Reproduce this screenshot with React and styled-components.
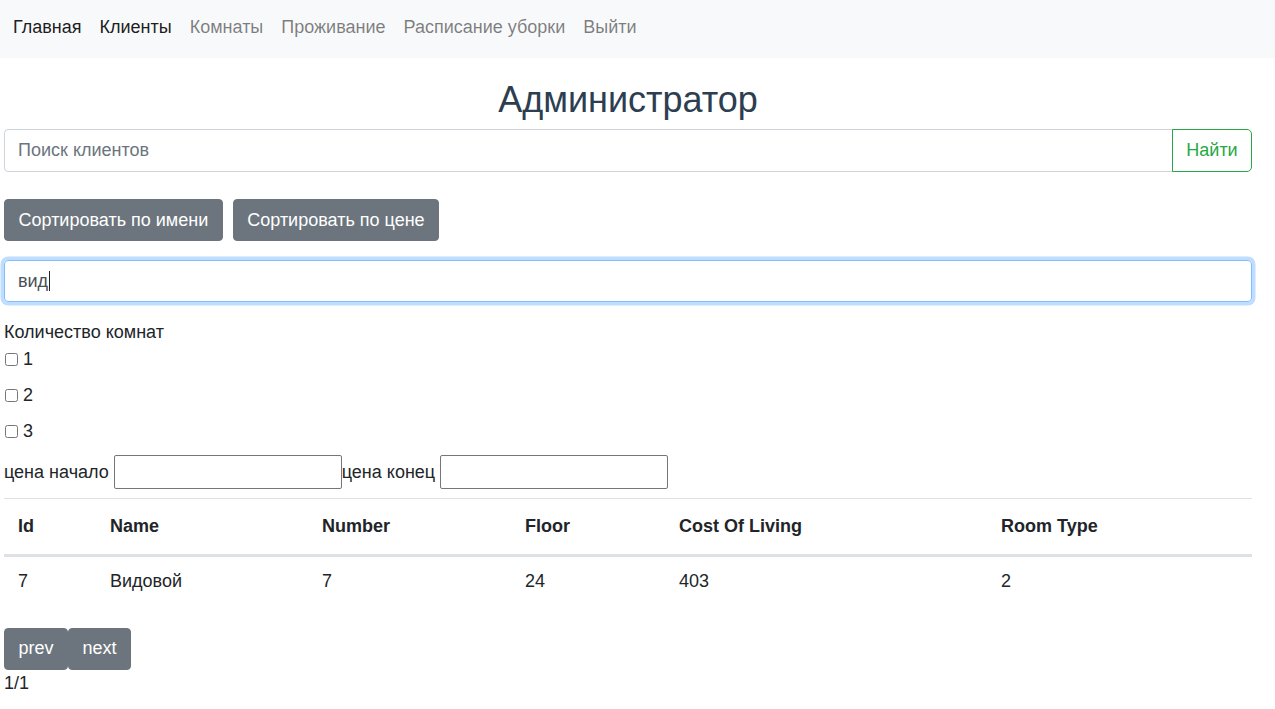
import React from "react";
import styled, { createGlobalStyle } from "styled-components";

const GlobalStyle = createGlobalStyle`
  * {
    box-sizing: border-box;
  }
  body {
    margin: 0;
    background: #fff;
    color: #212529;
    font-family: "Liberation Sans", Arial, sans-serif;
    font-size: 18px;
    line-height: 27px;
  }
`;

const NavBar = styled.nav`
  display: flex;
  align-items: center;
  height: 58px;
  padding: 0 4px 4px;
  background: #f8f9fa;
`;

const NavLink = styled.a`
  padding: 0 9px;
  font-size: 18px;
  color: ${(p) => (p.$strong ? "rgba(0, 0, 0, 0.9)" : "rgba(0, 0, 0, 0.5)")};
  text-decoration: none;
  cursor: pointer;
`;

const Main = styled.main`
  display: flex;
  flex-direction: column;
  padding: 0 23px 0 4px;
`;

const Title = styled.h2`
  margin: 20px 0 8px;
  text-align: center;
  font-size: 36px;
  font-weight: 400;
  line-height: 43px;
  color: #2c3e50;
`;

const InputGroup = styled.div`
  display: flex;
  height: 43px;
`;

const TextInput = styled.input`
  flex: 1;
  height: 43px;
  padding: 0 13px;
  font-family: inherit;
  font-size: 18px;
  color: #495057;
  background: #fff;
  border: 1px solid #ced4da;
  border-radius: 4px 0 0 4px;
  outline: none;

  &::placeholder {
    color: #6c757d;
  }
`;

const OutlineButton = styled.button`
  width: 80px;
  height: 43px;
  margin-left: -1px;
  font-family: inherit;
  font-size: 18px;
  color: #28a745;
  background: #fff;
  border: 1px solid #28a745;
  border-radius: 0 5px 5px 0;
`;

const ButtonRow = styled.div`
  display: flex;
  gap: ${(p) => p.$gap || 0}px;
  margin: ${(p) => p.$margin || "0"};
`;

const GreyButton = styled.button`
  height: 42px;
  padding: 0 13.5px;
  font-family: inherit;
  font-size: 18px;
  color: #fff;
  background: #6c757d;
  border: 1px solid #6c757d;
  border-radius: 4px;
`;

const Caret = styled.span`
  display: inline-block;
  width: 1px;
  height: 20px;
  margin-left: 1px;
  background: #212529;
  vertical-align: -4px;
`;

const FocusedField = styled.div`
  display: flex;
  align-items: center;
  height: 42px;
  margin-top: 19px;
  padding: 0 13px;
  font-size: 18px;
  color: #495057;
  border: 1px solid #80bdff;
  border-radius: 4px;
  box-shadow: 0 0 0 3.5px rgba(0, 123, 255, 0.25);
`;

const Label = styled.div`
  margin-top: 17px;
  line-height: 27px;
`;

const CheckRow = styled.label`
  display: flex;
  align-items: center;
  height: 27px;
  margin-bottom: 9px;

  input {
    width: 13px;
    height: 13px;
    margin: 0 5px 0 1px;
  }
`;

const PriceRow = styled.div`
  display: flex;
  align-items: center;
  margin: 1px 0 9px;
`;

const PriceInput = styled.input`
  width: 228px;
  height: 34px;
  margin-left: ${(p) => p.$offset || 0}px;
  border: 1px solid #767676;
  border-radius: 2px;
  font-family: inherit;
  font-size: 16px;
`;

const Table = styled.table`
  width: 100%;
  border-collapse: collapse;
  color: #212529;
`;

const Th = styled.th`
  width: ${(p) => p.$w}px;
  height: 57px;
  padding: 0 14px;
  text-align: left;
  font-weight: 700;
  border-top: 1px solid #dee2e6;
  border-bottom: 3px solid #dee2e6;
`;

const Td = styled.td`
  height: 55px;
  padding: 0 14px 4px;
`;

const Pager = styled.div`
  display: flex;
  margin-top: 17px;
`;

const PageText = styled.div`
  line-height: 27px;
`;

const columns = [
  ["Id", 92],
  ["Name", 212],
  ["Number", 203],
  ["Floor", 154],
  ["Cost Of Living", 322],
  ["Room Type", 265],
];

const rows = [["7", "Видовой", "7", "24", "403", "2"]];

export default function App() {
  return (
    <>
      <GlobalStyle />
      <NavBar>
        <NavLink $strong>Главная</NavLink>
        <NavLink $strong>Клиенты</NavLink>
        <NavLink>Комнаты</NavLink>
        <NavLink>Проживание</NavLink>
        <NavLink>Расписание уборки</NavLink>
        <NavLink>Выйти</NavLink>
      </NavBar>
      <Main>
        <Title>Администратор</Title>
        <InputGroup>
          <TextInput placeholder="Поиск клиентов" />
          <OutlineButton>Найти</OutlineButton>
        </InputGroup>
        <ButtonRow $gap={10} $margin="27px 0 0">
          <GreyButton>Сортировать по имени</GreyButton>
          <GreyButton>Сортировать по цене</GreyButton>
        </ButtonRow>
        <FocusedField>
          вид
          <Caret />
        </FocusedField>
        <Label>Количество комнат</Label>
        {["1", "2", "3"].map((n) => (
          <CheckRow key={n}>
            <input type="checkbox" />
            {n}
          </CheckRow>
        ))}
        <PriceRow>
          цена начало
          <PriceInput $offset={5} />
          цена конец
          <PriceInput $offset={5} />
        </PriceRow>
        <Table>
          <thead>
            <tr>
              {columns.map(([name, w]) => (
                <Th key={name} $w={w}>
                  {name}
                </Th>
              ))}
            </tr>
          </thead>
          <tbody>
            {rows.map((r, i) => (
              <tr key={i}>
                {r.map((c, j) => (
                  <Td key={j}>{c}</Td>
                ))}
              </tr>
            ))}
          </tbody>
        </Table>
        <Pager>
          <GreyButton>prev</GreyButton>
          <GreyButton>next</GreyButton>
        </Pager>
        <PageText>1/1</PageText>
      </Main>
    </>
  );
}
